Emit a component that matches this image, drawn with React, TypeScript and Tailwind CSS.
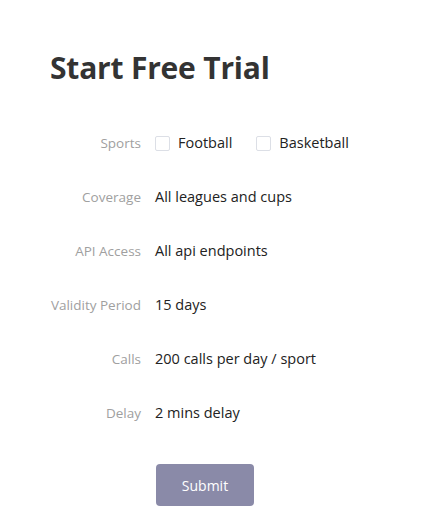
import React from 'react';

const rows: { label: string; value: string }[] = [
  { label: 'Coverage', value: 'All leagues and cups' },
  { label: 'API Access', value: 'All api endpoints' },
  { label: 'Validity Period', value: '15 days' },
  { label: 'Calls', value: '200 calls per day / sport' },
  { label: 'Delay', value: '2 mins delay' },
];

const Check = ({ label }: { label: string }) => (
  <label className="flex items-center gap-2 cursor-pointer">
    <span className="w-[15px] h-[15px] rounded-[2px] border border-[#dcdfe6] bg-white" />
    <span>{label}</span>
  </label>
);

export default function App() {
  return (
    <div className="w-[432px] h-[524px] bg-white pl-[50px] pt-[46px] text-[14.5px] text-[#222] font-['Open_Sans',sans-serif]">
      <h1 className="text-[30px] font-bold text-[#333] leading-[44px] tracking-[-0.2px]">Start Free Trial</h1>

      <div className="mt-[26px] flex flex-col">
        <div className="flex items-center h-[54px]">
          <div className="w-[91px] text-right text-[13.5px] text-[#a0a0a0]">Sports</div>
          <div className="ml-[14px] flex items-center gap-[24px]">
            <Check label="Football" />
            <Check label="Basketball" />
          </div>
        </div>
        {rows.map(r => (
          <div key={r.label} className="flex items-center h-[54px]">
            <div className="w-[91px] text-right text-[13.5px] text-[#a0a0a0] whitespace-nowrap">{r.label}</div>
            <div className="ml-[14px]">{r.value}</div>
          </div>
        ))}
      </div>

      <div className="mt-[24px] pl-[106px]">
        <button className="w-[98px] h-[42px] rounded-[4px] bg-[#8a8aa8] text-white text-[14px]">Submit</button>
      </div>
    </div>
  );
}
